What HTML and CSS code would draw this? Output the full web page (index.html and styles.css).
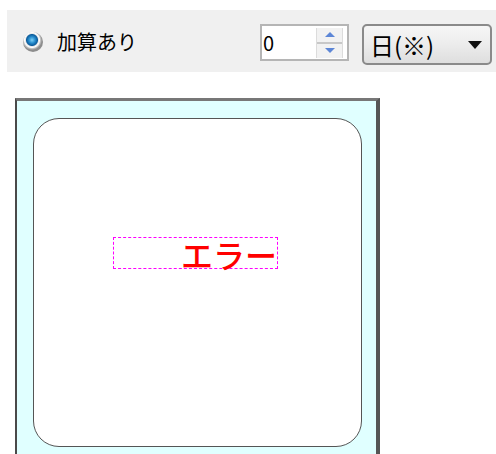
FILE: index.html
```html
<!DOCTYPE html>
<html lang="ja">
<head>
  <meta charset="UTF-8" />
  <title>加算あり</title>
  <link rel="stylesheet" href="styles.css">
</head>
<body>

  <div class="toolbar">
    <label class="radio">
      <span class="radio-dot"></span>
      <span class="radio-label">加算あり</span>
    </label>

    <div class="spin">
      <span class="spin-value">0</span>
      <span class="spin-buttons">
        <span class="spin-up"></span>
        <span class="spin-down"></span>
      </span>
    </div>

    <div class="select">
      <span class="select-value">日(※)</span>
      <span class="select-arrow"></span>
    </div>
  </div>

  <div class="canvas">
    <div class="card">
      <div class="label-box">
        <span class="label-text">エラー</span>
      </div>
    </div>
  </div>

</body>
</html>
```

FILE: styles.css
```css
body {
  margin: 0;
  background-color: #fff;
  font-family: "Noto Sans CJK JP", "Noto Sans", sans-serif;
  color: #000;
  overflow: hidden;
}

.toolbar {
  display: flex;
  align-items: center;
  height: 62px;
  margin: 10px 0 0 7px;
  background-color: #f0f0f0;
}

.radio {
  display: flex;
  align-items: center;
  margin-left: 16px;
  margin-right: auto;
  margin-top: 2px;
}

.radio-dot {
  width: 20px;
  height: 20px;
  border-radius: 50%;
  background: radial-gradient(circle at 45% 40%, #7fd0f4 0, #2a90d0 3px, #0b5c9c 5.5px, #e8e8e8 6.5px, #fff 7.5px, #c4c4c4 8.5px, #8d8d8d 10px);
}

.radio-label {
  margin-left: 14px;
  font-size: 20px;
  line-height: 24px;
}

.spin {
  display: flex;
  align-items: center;
  width: 89px;
  height: 37px;
  box-sizing: border-box;
  border: 2px solid #b5b5b5;
  background-color: #fff;
  margin-right: 13px;
  margin-top: 3px;
}

.spin-value {
  flex: 1;
  padding-left: 1px;
  font-size: 20px;
  line-height: 24px;
}

.spin-buttons {
  display: flex;
  flex-direction: column;
  width: 25px;
  height: 30px;
  margin-right: 4px;
  border-left: 1px solid #dcdcdc;
  border-right: 1px solid #dcdcdc;
}

.spin-up,
.spin-down {
  flex: 1;
  display: flex;
  align-items: center;
  justify-content: center;
  background-color: #f2f2f2;
}

.spin-up {
  border-bottom: 2px solid #c8c8c8;
}

.spin-up::after {
  content: "";
  border-left: 5px solid transparent;
  border-right: 5px solid transparent;
  border-bottom: 5px solid #5d86d6;
}

.spin-down::after {
  content: "";
  border-left: 5px solid transparent;
  border-right: 5px solid transparent;
  border-top: 5px solid #5d86d6;
}

.select {
  display: flex;
  align-items: center;
  width: 130px;
  height: 41px;
  box-sizing: border-box;
  border: 2px solid #8a8a8a;
  border-radius: 5px;
  background: linear-gradient(#f6f6f6, #ececec 50%, #dedede);
  margin-right: 4px;
  margin-top: 7px;
  padding: 0 8px 0 6px;
}

.select-value {
  flex: 1;
  font-size: 24px;
  line-height: 28px;
}

.select-arrow {
  border-left: 7px solid transparent;
  border-right: 7px solid transparent;
  border-top: 8px solid #111;
}

.canvas {
  width: 365px;
  height: 380px;
  box-sizing: border-box;
  margin: 26px 0 0 15px;
  padding: 17px 0 0 16px;
  background-color: #e0ffff;
  border-top: 3px solid #777;
  border-left: 2px solid #4a4a4a;
  border-right: 4px solid #555;
}

.card {
  width: 329px;
  height: 329px;
  box-sizing: border-box;
  border: 1.5px solid #555;
  border-radius: 26px;
  background-color: #fff;
  padding: 118px 0 0 79px;
}

.label-box {
  display: flex;
  justify-content: flex-end;
  align-items: center;
  width: 165px;
  height: 32px;
  box-sizing: border-box;
  border: 1px dashed #ff00ff;
}

.label-text {
  color: #ff0000;
  font-size: 32px;
  font-weight: 500;
  line-height: 30px;
  margin-top: 2px;
}
```
